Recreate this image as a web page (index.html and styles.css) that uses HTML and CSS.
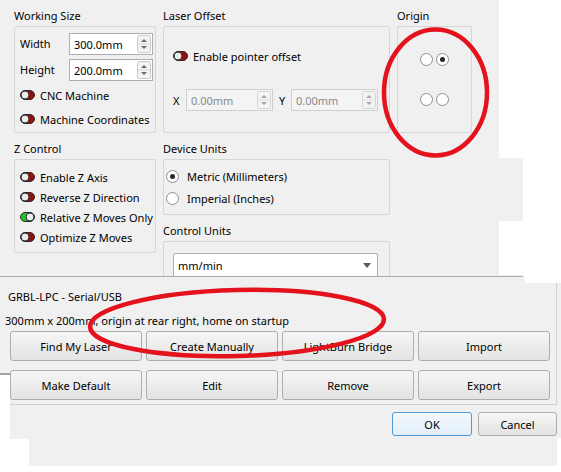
FILE: index.html
```html
<!DOCTYPE html>
<html lang="en">
<head>
  <meta charset="UTF-8" />
  <title>Device Settings</title>
  <link rel="stylesheet" href="styles.css">
</head>
<body>
<div class="screen">
  <div class="top">
    <section>
      <div class="group-title">Working Size</div>
      <div class="box size-box">
        <span class="lbl">Width</span>
        <div class="spin"><span>300.0mm</span>
          <svg class="arrows" width="14" height="18" viewBox="0 0 14 18"><rect x="0.5" y="0.5" width="13" height="17" rx="2" fill="#f4f4f4" stroke="#c9c9c9"/><line x1="1" y1="9" x2="13" y2="9" stroke="#d4d4d4"/><path d="M4 7 L7 4 L10 7Z" fill="#6a6a6a"/><path d="M4 11 L7 14 L10 11Z" fill="#6a6a6a"/></svg>
        </div>
        <span class="lbl">Height</span>
        <div class="spin"><span>200.0mm</span>
          <svg class="arrows" width="14" height="18" viewBox="0 0 14 18"><rect x="0.5" y="0.5" width="13" height="17" rx="2" fill="#f4f4f4" stroke="#c9c9c9"/><line x1="1" y1="9" x2="13" y2="9" stroke="#d4d4d4"/><path d="M4 7 L7 4 L10 7Z" fill="#6a6a6a"/><path d="M4 11 L7 14 L10 11Z" fill="#6a6a6a"/></svg>
        </div>
        <div class="toggle-row wide">
          <svg class="toggle" width="15" height="10" viewBox="0 0 15 10"><rect x="0.5" y="0.5" width="14" height="9" rx="4.5" fill="#9a0d0d" stroke="#2a2a2a"/><circle cx="5" cy="5" r="4" fill="#ececec" stroke="#2a2a2a"/></svg>
          CNC Machine
        </div>
        <div class="toggle-row wide">
          <svg class="toggle" width="15" height="10" viewBox="0 0 15 10"><rect x="0.5" y="0.5" width="14" height="9" rx="4.5" fill="#9a0d0d" stroke="#2a2a2a"/><circle cx="5" cy="5" r="4" fill="#ececec" stroke="#2a2a2a"/></svg>
          Machine Coordinates
        </div>
      </div>
    </section>

    <section>
      <div class="group-title">Laser Offset</div>
      <div class="box offset-box">
        <div class="toggle-row">
          <svg class="toggle" width="15" height="10" viewBox="0 0 15 10"><rect x="0.5" y="0.5" width="14" height="9" rx="4.5" fill="#9a0d0d" stroke="#2a2a2a"/><circle cx="5" cy="5" r="4" fill="#ececec" stroke="#2a2a2a"/></svg>
          Enable pointer offset
        </div>
        <div class="offset-row">
          <span class="axis">X</span>
          <div class="spin spin-off"><span>0.00mm</span>
            <svg class="arrows" width="14" height="18" viewBox="0 0 14 18"><rect x="0.5" y="0.5" width="13" height="17" rx="2" fill="#f4f4f4" stroke="#d4d4d4"/><line x1="1" y1="9" x2="13" y2="9" stroke="#dcdcdc"/><path d="M4 7 L7 4 L10 7Z" fill="#a8a8a8"/><path d="M4 11 L7 14 L10 11Z" fill="#a8a8a8"/></svg>
          </div>
          <span class="axis axis-y">Y</span>
          <div class="spin spin-off"><span>0.00mm</span>
            <svg class="arrows" width="14" height="18" viewBox="0 0 14 18"><rect x="0.5" y="0.5" width="13" height="17" rx="2" fill="#f4f4f4" stroke="#d4d4d4"/><line x1="1" y1="9" x2="13" y2="9" stroke="#dcdcdc"/><path d="M4 7 L7 4 L10 7Z" fill="#a8a8a8"/><path d="M4 11 L7 14 L10 11Z" fill="#a8a8a8"/></svg>
          </div>
        </div>
      </div>
    </section>

    <section>
      <div class="group-title">Origin</div>
      <div class="box origin-box">
        <span class="radio"></span><span class="radio on"></span>
        <span class="radio"></span><span class="radio"></span>
      </div>
    </section>

    <section>
      <div class="group-title">Z Control</div>
      <div class="box z-box">
        <div class="toggle-row">
          <svg class="toggle" width="15" height="10" viewBox="0 0 15 10"><rect x="0.5" y="0.5" width="14" height="9" rx="4.5" fill="#9a0d0d" stroke="#2a2a2a"/><circle cx="5" cy="5" r="4" fill="#ececec" stroke="#2a2a2a"/></svg>
          Enable Z Axis
        </div>
        <div class="toggle-row">
          <svg class="toggle" width="15" height="10" viewBox="0 0 15 10"><rect x="0.5" y="0.5" width="14" height="9" rx="4.5" fill="#9a0d0d" stroke="#2a2a2a"/><circle cx="5" cy="5" r="4" fill="#ececec" stroke="#2a2a2a"/></svg>
          Reverse Z Direction
        </div>
        <div class="toggle-row">
          <svg class="toggle" width="15" height="10" viewBox="0 0 15 10"><rect x="0.5" y="0.5" width="14" height="9" rx="4.5" fill="#22c322" stroke="#2a2a2a"/><circle cx="10" cy="5" r="4" fill="#ececec" stroke="#2a2a2a"/></svg>
          Relative Z Moves Only
        </div>
        <div class="toggle-row">
          <svg class="toggle" width="15" height="10" viewBox="0 0 15 10"><rect x="0.5" y="0.5" width="14" height="9" rx="4.5" fill="#9a0d0d" stroke="#2a2a2a"/><circle cx="5" cy="5" r="4" fill="#ececec" stroke="#2a2a2a"/></svg>
          Optimize Z Moves
        </div>
      </div>
    </section>

    <section>
      <div class="group-title">Device Units</div>
      <div class="box units-box">
        <div class="radio-row"><span class="radio on"></span>Metric (Millimeters)</div>
        <div class="radio-row"><span class="radio"></span>Imperial (Inches)</div>
      </div>
      <div class="group-title control-title">Control Units</div>
      <div class="box control-box">
        <div class="combo"><span>mm/min</span>
          <svg width="8" height="5" viewBox="0 0 8 5"><path d="M0 0h8L4 5z" fill="#5a5a5a"/></svg>
        </div>
      </div>
    </section>
  </div>

  <div class="bottom">
    <div class="laser-group">
      <div class="device-name">GRBL-LPC - Serial/USB</div>
      <div class="device-desc">300mm x 200mm, origin at rear right, home on startup</div>
      <div class="laser-buttons">
        <button class="btn">Find My Laser</button>
        <button class="btn">Create Manually</button>
        <button class="btn">LightBurn Bridge</button>
        <button class="btn">Import</button>
        <button class="btn">Make Default</button>
        <button class="btn">Edit</button>
        <button class="btn">Remove</button>
        <button class="btn">Export</button>
      </div>
    </div>
    <div class="dialog-buttons">
      <button class="btn small default">OK</button>
      <button class="btn small cancel">Cancel</button>
    </div>
  </div>

  <!-- red marker circles drawn over the screenshot -->
  <svg class="marks" width="561" height="472" viewBox="0 0 561 472">
    <ellipse cx="435.5" cy="92.5" rx="51.5" ry="63" fill="none" stroke="#e3121d" stroke-width="4.5"/>
    <ellipse cx="237" cy="323" rx="147" ry="33" fill="none" stroke="#e3121d" stroke-width="4.5" transform="rotate(-1.5 237 323)"/>
  </svg>
</div>
</body>
</html>
```

FILE: styles.css
```css
body {
  margin: 0;
  background: #fff;
  font-family: "Noto Sans", "Liberation Sans", sans-serif;
  font-size: 11px;
  color: #000;
}
.screen {
  position: relative;
  width: 561px;
  height: 472px;
  overflow: hidden;
}

/* top settings panel */
.top {
  width: 523px;
  height: 277px;
  box-sizing: border-box;
  background: #f0f0f0;
  border-bottom: 1px solid #a9a9a9;
  padding: 6px 0 0 14px;
  display: grid;
  grid-template-columns: 142px 227px 75px;
  grid-template-rows: 127px auto;
  column-gap: 7px;
  row-gap: 6px;
  overflow: hidden;
  clip-path: polygon(0 0, 499px 0, 499px 158px, 523px 158px, 523px 221px, 499px 221px, 499px 275px, 523px 275px, 523px 277px, 0 277px);
}
.group-title {
  height: 20px;
  line-height: 20px;
}
.box {
  box-sizing: border-box;
  border: 1px solid #d6d6d6;
  border-radius: 2px;
}
.size-box {
  height: 107px;
  padding: 6px 0 0 5px;
  display: grid;
  grid-template-columns: 49px 84px;
  grid-template-rows: 22px 22px 20px 20px;
  row-gap: 4px;
}
.lbl {
  line-height: 22px;
}
.wide {
  grid-column: span 2;
}
.spin {
  box-sizing: border-box;
  width: 84px;
  height: 22px;
  display: flex;
  align-items: center;
  background: #fff;
  border: 1px solid #abadb3;
  padding: 0 1px 0 4px;
}
.spin .arrows {
  margin-left: auto;
}
.spin-off {
  width: 87px;
  background: #f4f4f4;
  border-color: #cfcfcf;
  color: #8a8a8a;
}
.toggle-row {
  height: 20px;
  display: flex;
  align-items: center;
  gap: 5px;
}
.offset-box {
  height: 107px;
  padding: 19px 0 0 9px;
}
.offset-row {
  margin-top: 23px;
  display: flex;
  align-items: center;
}
.axis {
  width: 13px;
}
.axis-y {
  width: 12px;
  margin-left: 6px;
}
.origin-box {
  height: 107px;
  padding-top: 26px;
  display: grid;
  grid-template-columns: 13px 13px;
  grid-auto-rows: 13px;
  column-gap: 3px;
  row-gap: 27px;
  justify-content: center;
  align-content: start;
}
.radio {
  position: relative;
  box-sizing: border-box;
  width: 13px;
  height: 13px;
  border: 1px solid #8f8f8f;
  border-radius: 50%;
  background: #fff;
  flex: none;
}
.radio.on::after {
  content: "";
  position: absolute;
  left: 3px;
  top: 3px;
  width: 5px;
  height: 5px;
  border-radius: 50%;
  background: #262626;
}
.z-box {
  height: 94px;
  padding: 7px 0 0 5px;
}
.units-box {
  height: 56px;
  padding: 5px 0 0 2px;
}
.radio-row {
  height: 22px;
  display: flex;
  align-items: center;
  gap: 8px;
}
.control-title {
  margin-top: 6px;
}
.control-box {
  height: 60px;
  padding: 11px 0 0 9px;
}
.combo {
  box-sizing: border-box;
  width: 205px;
  height: 25px;
  display: flex;
  align-items: center;
  justify-content: space-between;
  padding: 0 6px 0 4px;
  background: #fff;
  border: 1px solid #abadb3;
  border-radius: 2px;
}

/* laser list panel */
.bottom {
  position: relative;
  height: 189px;
  background: #f0f0f0;
  clip-path: polygon(0 0, 525px 0, 525px 6px, 561px 6px, 561px 161px, 557px 161px, 557px 189px, 29px 189px, 29px 162px, 10px 162px, 10px 98px, 0 98px);
}
.bottom::before {
  content: "";
  position: absolute;
  left: 0;
  top: 96px;
  width: 10px;
  height: 2px;
  background: #a4a4a4;
}
.laser-group {
  width: 557px;
  box-sizing: border-box;
  border-right: 1px solid #d0d0d0;
  border-bottom: 1px solid #d0d0d0;
  padding: 10px 6px 4px 0;
}
.device-name {
  line-height: 20px;
  padding-left: 8px;
}
.device-desc {
  margin-top: 4px;
  line-height: 20px;
  padding-left: 5px;
}
.laser-buttons {
  margin-left: 10px;
  display: grid;
  grid-template-columns: repeat(4, 132px);
  grid-auto-rows: 30px;
  gap: 9px 4px;
}
.btn {
  font: inherit;
  color: #000;
  border: 1px solid #adadad;
  border-radius: 3px;
  background: linear-gradient(#f6f6f6, #e3e3e3);
  padding: 0;
}
.dialog-buttons {
  width: 557px;
  margin-top: 7px;
  display: flex;
  justify-content: flex-end;
  gap: 6px;
}
.small {
  width: 80px;
  height: 24px;
}
.cancel {
  width: 79px;
}
.default {
  border-color: #4f9ad6;
  background: linear-gradient(#f3f9fd, #e2eef8);
}

.marks {
  position: absolute;
  left: 0;
  top: 0;
  pointer-events: none;
}
```
